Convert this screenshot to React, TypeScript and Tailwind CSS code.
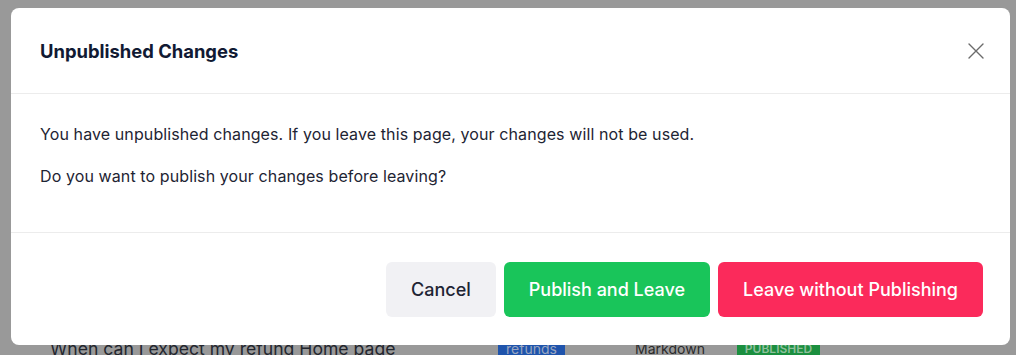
import React from 'react';

function CloseIcon() {
  return (
    <svg width="16" height="16" viewBox="0 0 16 16" fill="none" stroke="#6b6b6b" strokeWidth="1.4" strokeLinecap="round">
      <path d="M1 1L15 15M15 1L1 15" />
    </svg>
  );
}

function App() {
  return (
    <div className="relative h-[355px] w-full overflow-hidden bg-[#999999] font-['Inter',sans-serif]">
      {/* page behind the overlay */}
      <div className="flex flex-col pt-[335px]">
        <div className="flex h-7 items-center">
          <div className="w-[498px] pl-[50px] text-[17.6px] text-[#23262e] whitespace-nowrap">
            When can I expect my refund Home page
          </div>
          <div className="flex h-6 w-[67px] items-center justify-center rounded-md bg-[#1f54ac] text-sm text-[#9aa6c0]">
            refunds
          </div>
          <div className="ml-[40px] flex h-7 w-[130px] items-center justify-center text-sm text-[#2a2a2a]">
            Markdown
          </div>
          <div className="ml-[2px] flex h-6 w-[83px] items-center justify-center rounded-md bg-[#1b8f3f] text-xs font-semibold text-[#8fbf9c]">
            PUBLISHED
          </div>
        </div>
      </div>

      {/* modal */}
      <div className="absolute left-[11px] top-[8px] w-[999px] rounded-lg bg-white">
        <div className="flex items-center justify-between border-b border-[#ececec] pt-[29px] pb-7 pl-[29px] pr-[20px]">
          <h2 className="text-[18.4px] leading-7 font-bold text-[#111a33]">Unpublished Changes</h2>
          <button className="flex h-7 w-7 items-center justify-center">
            <CloseIcon />
          </button>
        </div>
        <div className="border-b border-[#ececec] pl-[29px] pr-7 pt-[28px] pb-[44px] text-base leading-6 tracking-[0.1px] text-[#1e2433]">
          <p className="mb-[18px]">You have unpublished changes. If you leave this page, your changes will not be used.</p>
          <p>Do you want to publish your changes before leaving?</p>
        </div>
        <div className="flex justify-end gap-2 pt-[29px] pb-[28px] pr-[27px]">
          <button className="h-[55px] rounded-md bg-[#f1f1f4] px-[25px] text-lg font-medium text-[#1e2433]">
            Cancel
          </button>
          <button className="h-[55px] rounded-md bg-[#19c55a] px-[25px] text-lg font-medium text-white">
            Publish and Leave
          </button>
          <button className="h-[55px] rounded-md bg-[#fb2a5b] px-[25px] text-lg font-medium text-white">
            Leave without Publishing
          </button>
        </div>
      </div>
    </div>
  );
}

export default App;
